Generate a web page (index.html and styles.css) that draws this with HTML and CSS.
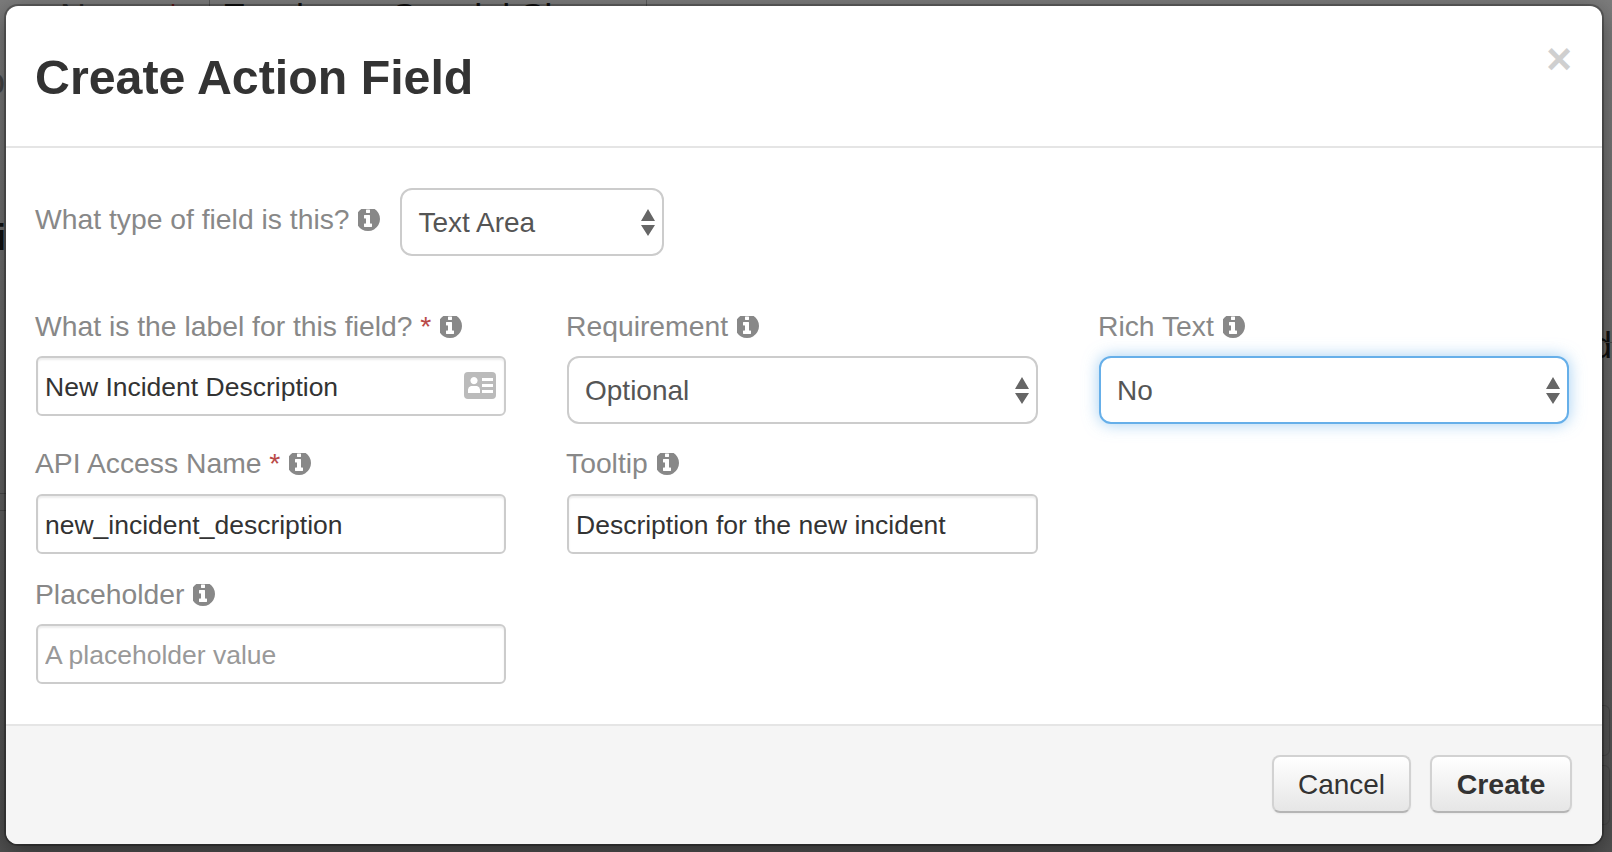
FILE: index.html
```html
<!DOCTYPE html>
<html lang="en">

<head>
  <meta charset="UTF-8">
  <title>Create Action Field</title>
  <link rel="stylesheet" href="styles.css">
</head>

<body>
  <!-- page behind the dialog, only slivers of it show -->
  <div class="backdrop">
    <span class="bg-text bg-name">Name <em>*</em></span>
    <span class="bg-text bg-special">Employee Special Sh</span>
    <span class="bg-text bg-round">o</span>
    <span class="bg-text bg-left">i</span>
    <span class="bg-text bg-right">d</span>
    <span class="bg-rule bg-rule-1"></span>
    <span class="bg-rule bg-rule-2"></span>
    <span class="bg-line bg-line-1"></span>
    <span class="bg-line bg-line-2"></span>
    <span class="bg-line bg-line-3"></span>
    <span class="bg-box bg-box-1"></span>
    <span class="bg-box bg-box-2"></span>
  </div>

  <div class="modal">
    <div class="modal-header">
      <h1>Create Action Field</h1>
      <button class="close">×</button>
    </div>

    <div class="modal-body">
      <div class="type-row">
        <label>What type of field is this?
          <svg class="info" viewBox="128 128 1536 1536"><use href="#info-circle"></use></svg>
        </label>
        <select class="select type-select">
          <option>Text Area</option>
        </select>
      </div>

      <div class="fields">
        <div class="field">
          <label>What is the label for this field? <span class="req">*</span>
            <svg class="info" viewBox="128 128 1536 1536"><use href="#info-circle"></use></svg>
          </label>
          <div class="input-wrap">
            <input class="input" type="text" value="New Incident Description">
            <svg class="card-icon" viewBox="0 0 32 27">
              <path fill-rule="evenodd" d="M4 0h24a4 4 0 0 1 4 4v19a4 4 0 0 1-4 4H4a4 4 0 0 1-4-4V4a4 4 0 0 1 4-4zM10 5a3.600 3.600 0 1 0 .01 0zM4 21h12v-3.500a4 4 0 0 0-3-3.600h-6a4 4 0 0 0-3 3.600zM18 6v3h11V6zM18 12v3h11v-3zM18 18v3h11v-3z"/>
            </svg>
          </div>
        </div>
        <div class="field">
          <label>Requirement
            <svg class="info" viewBox="128 128 1536 1536"><use href="#info-circle"></use></svg>
          </label>
          <select class="select">
            <option>Optional</option>
            <option>Required</option>
          </select>
        </div>
        <div class="field">
          <label>Rich Text
            <svg class="info" viewBox="128 128 1536 1536"><use href="#info-circle"></use></svg>
          </label>
          <select class="select focused">
            <option>No</option>
            <option>Yes</option>
          </select>
        </div>

        <div class="field">
          <label>API Access Name <span class="req">*</span>
            <svg class="info" viewBox="128 128 1536 1536"><use href="#info-circle"></use></svg>
          </label>
          <input class="input" type="text" value="new_incident_description">
        </div>
        <div class="field">
          <label>Tooltip
            <svg class="info" viewBox="128 128 1536 1536"><use href="#info-circle"></use></svg>
          </label>
          <input class="input" type="text" value="Description for the new incident">
        </div>
        <div class="field first-col">
          <label>Placeholder
            <svg class="info" viewBox="128 128 1536 1536"><use href="#info-circle"></use></svg>
          </label>
          <input class="input" type="text" placeholder="A placeholder value">
        </div>
      </div>
    </div>

    <div class="modal-footer">
      <button class="btn btn-cancel">Cancel</button>
      <button class="btn btn-create">Create</button>
    </div>
  </div>

  <svg class="defs" width="0" height="0">
    <symbol id="info-circle" viewBox="128 128 1536 1536">
      <path fill-rule="evenodd" d="M1152 1376v-160q0-14-9-23t-23-9h-96v-512q0-14-9-23t-23-9h-320q-14 0-23 9t-9 23v160q0 14 9 23t23 9h96v320h-96q-14 0-23 9t-9 23v160q0 14 9 23t23 9h448q14 0 23-9t9-23zm-128-896v-160q0-14-9-23t-23-9h-192q-14 0-23 9t-9 23v160q0 14 9 23t23 9h192q14 0 23-9t9-23zm640 416q0 209-103 385.500t-279.500 279.500-385.500 103-385.500-103-279.500-279.500-103-385.500 103-385.500 279.500-279.500 385.500-103 385.500 103 279.500 279.500 103 385.500z"/>
    </symbol>
  </svg>
</body>

</html>
```

FILE: styles.css
```css
* {
  box-sizing: border-box;
}

html,
body {
  height: 100%;
}

body {
  margin: 0;
  height: 852px;
  padding: 6px 10px 8px 6px;
  overflow: hidden;
  position: relative;
  font-family: "Liberation Sans", Arial, sans-serif;
  background: linear-gradient(#7c7c7c, #6a6a6a 40%, #505050);
}

.backdrop {
  position: absolute;
  inset: 0;
  overflow: hidden;
}

.bg-text {
  position: absolute;
  font-size: 36px;
  line-height: 40px;
  color: #111;
}

.bg-text em {
  color: #7a1f1f;
  font-style: normal;
}

.bg-name {
  left: 60px;
  top: -2px;
  color: #333;
}

.bg-special {
  left: 222px;
  top: -2px;
}

.bg-round {
  left: -15px;
  top: 62px;
  color: #444;
}

.bg-left {
  left: -4px;
  top: 218px;
  font-weight: bold;
}

.bg-right {
  left: 1592px;
  top: 326px;
}

.bg-rule {
  position: absolute;
  top: 0;
  width: 1px;
  height: 6px;
  background: #5a5a5a;
}

.bg-rule-1 {
  left: 209px;
}

.bg-rule-2 {
  left: 646px;
}

.bg-line {
  position: absolute;
  height: 1px;
  background: #4a4a4a;
}

.bg-line-1 {
  left: 0;
  top: 493px;
  width: 6px;
}

.bg-line-2 {
  left: 0;
  top: 510px;
  width: 6px;
}

.bg-line-3 {
  left: 1604px;
  top: 342px;
  width: 8px;
}

.bg-box {
  position: absolute;
  left: 1580px;
  width: 30px;
  border: 1px solid #474747;
  border-radius: 6px;
}

.bg-box-1 {
  top: 705px;
  height: 51px;
}

.bg-box-2 {
  top: 765px;
  height: 60px;
}

.modal {
  position: relative;
  width: 1596px;
  height: 838px;
  display: flex;
  flex-direction: column;
  background: #fff;
  border-radius: 12px;
  box-shadow: 0 0 0 2px rgba(0, 0, 0, .25), 0 6px 24px rgba(0, 0, 0, .45);
}

.modal-header {
  height: 142px;
  flex: none;
  display: flex;
  justify-content: space-between;
  padding: 0 30px 0 29px;
  border-bottom: 2px solid #e5e5e5;
}

.modal-header h1 {
  margin: 43px 0 0;
  font-size: 48.3px;
  line-height: 56px;
  font-weight: bold;
  color: #333;
}

.close {
  align-self: flex-start;
  margin-top: 29px;
  padding: 0;
  border: none;
  background: none;
  font-family: inherit;
  font-size: 44px;
  line-height: 48px;
  font-weight: bold;
  color: #cfcfcf;
}

.modal-body {
  flex: 1;
  padding: 40px 33px 0 30px;
}

label {
  display: block;
  font-size: 28.3px;
  line-height: 33px;
  color: #888;
}

.info {
  width: 24px;
  height: 24px;
  margin-left: 1px;
  vertical-align: -4px;
  fill: #888;
}

.req {
  color: #b94a48;
}

.type-row {
  display: flex;
  align-items: center;
  gap: 18px;
  margin-bottom: 54px;
}

.type-row label {
  margin-left: -1px;
  margin-top: -6px;
}

.fields {
  display: grid;
  grid-template-columns: 470px 471px 470px;
  column-gap: 61px;
  align-items: start;
}

.field {
  margin-bottom: 23px;
}

.field label {
  margin: 0 0 13px -1px;
}

.field:nth-child(n+4) label {
  margin-bottom: 14px;
}

.first-col {
  grid-column: 1;
  margin-top: 1px;
}

.field.first-col label {
  margin-bottom: 13px;
}

.input-wrap {
  position: relative;
}

.input {
  display: block;
  width: 100%;
  height: 60px;
  padding: 2px 7px 0;
  border: 2px solid #ccc;
  border-radius: 6px;
  background: #fff;
  box-shadow: inset 0 2px 2px rgba(0, 0, 0, .075);
  font-family: inherit;
  font-size: 26.5px;
  color: #333;
  outline: none;
}

.input::placeholder {
  color: #999;
  opacity: 1;
}

.card-icon {
  position: absolute;
  right: 10px;
  top: 16px;
  width: 32px;
  height: 27px;
  fill: #bbb;
}

.select {
  display: block;
  width: 100%;
  height: 68px;
  padding: 0 40px 0 16px;
  border: 2px solid #ccc;
  border-radius: 12px;
  appearance: none;
  -webkit-appearance: none;
  background-color: #fff;
  background-image: url("data:image/svg+xml;utf8,<svg xmlns='http://www.w3.org/2000/svg' width='14' height='27'><path fill='%23666' d='M7 0l7 12H0zM0 16h14l-7 11z'/></svg>");
  background-repeat: no-repeat;
  background-position: right 7px center;
  font-family: inherit;
  font-size: 28px;
  color: #555;
  outline: none;
}

.type-select {
  width: 264px;
}

.focused {
  border-color: #66afe9;
  box-shadow: 0 0 16px rgba(102, 175, 233, .6);
}

.modal-footer {
  height: 120px;
  flex: none;
  display: flex;
  justify-content: flex-end;
  gap: 19px;
  padding: 29px 30px 0 0;
  background: #f5f5f5;
  border-top: 2px solid #e5e5e5;
  border-radius: 0 0 12px 12px;
}

.btn {
  height: 58px;
  padding-top: 2px;
  border: 2px solid #d2d2d2;
  border-bottom-color: #b5b5b5;
  border-radius: 8px;
  background: linear-gradient(#fff, #e6e6e6);
  box-shadow: 0 1px 2px rgba(0, 0, 0, .05);
  font-family: inherit;
  font-size: 28px;
  color: #333;
}

.btn-cancel {
  width: 139px;
}

.btn-create {
  width: 142px;
  font-size: 28.5px;
  font-weight: bold;
}

.defs {
  position: absolute;
}
```
